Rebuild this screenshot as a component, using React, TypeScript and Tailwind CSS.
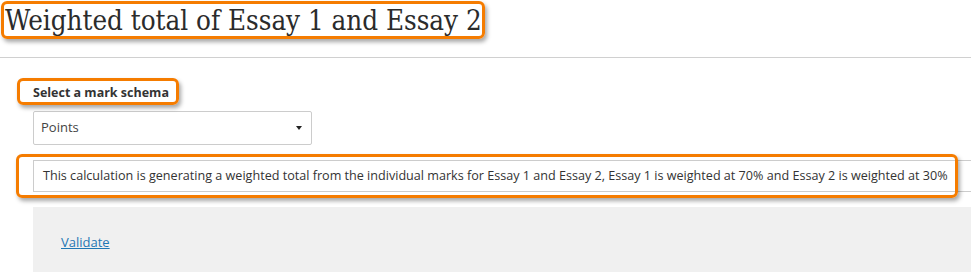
import React from "react";

const Annot = ({ className }: { className: string }) => (
  <div
    className={`pointer-events-none absolute rounded-[6px] border-[3px] border-[#f57c00] shadow-[2px_3px_4px_rgba(0,0,0,0.35)] ${className}`}
  />
);

export default function App() {
  return (
    <div className="relative h-[272px] w-[971px] overflow-hidden bg-white font-['Open_Sans',sans-serif] text-[#333]">
      <div className="box-border h-[58px] border-b border-[#d0d0d0] pl-[5px] pt-[2px]">
        <h1 className="font-['DejaVu_Serif',serif] font-stretch-condensed text-[27.5px] font-normal leading-[36px] text-[#2b2b2b]">
          Weighted total of Essay 1 and Essay 2
        </h1>
      </div>
      <div className="flex flex-col items-start pl-[33px]">
        <div className="mt-[26px] text-[12.5px] font-bold leading-[18px] text-[#333]">Select a mark schema</div>
        <div className="mt-[9px] box-border flex h-[34px] w-[279px] items-center justify-between rounded-[2px] border border-[#ccc] pl-[7px] pr-[9px] text-[13px] text-[#444]">
          <span>Points</span>
          <svg width="6" height="4" viewBox="0 0 6 4">
            <path d="M0 0H6L3 4Z" fill="#222" />
          </svg>
        </div>
        <div className="mt-[15px] box-border flex h-[32px] w-full items-center whitespace-nowrap border border-r-0 border-[#ccc] pl-[9px] text-[12.6px] text-[#333]">
          This calculation is generating a weighted total from the individual marks for Essay 1 and Essay 2, Essay 1 is weighted at 70% and Essay 2 is weighted at 30%
        </div>
        <div className="mt-[15px] h-[70px] w-full bg-[#f0f0f0] pl-[28px] pt-[22px]">
          <a href="#" className="text-[13px] leading-[18px] text-[#1f77b4] underline">
            Validate
          </a>
        </div>
      </div>
      <Annot className="left-[1px] top-[1px] h-[38px] w-[484px]" />
      <Annot className="left-[17px] top-[78px] h-[27px] w-[162px]" />
      <Annot className="left-[16px] top-[154px] h-[44px] w-[942px]" />
    </div>
  );
}
